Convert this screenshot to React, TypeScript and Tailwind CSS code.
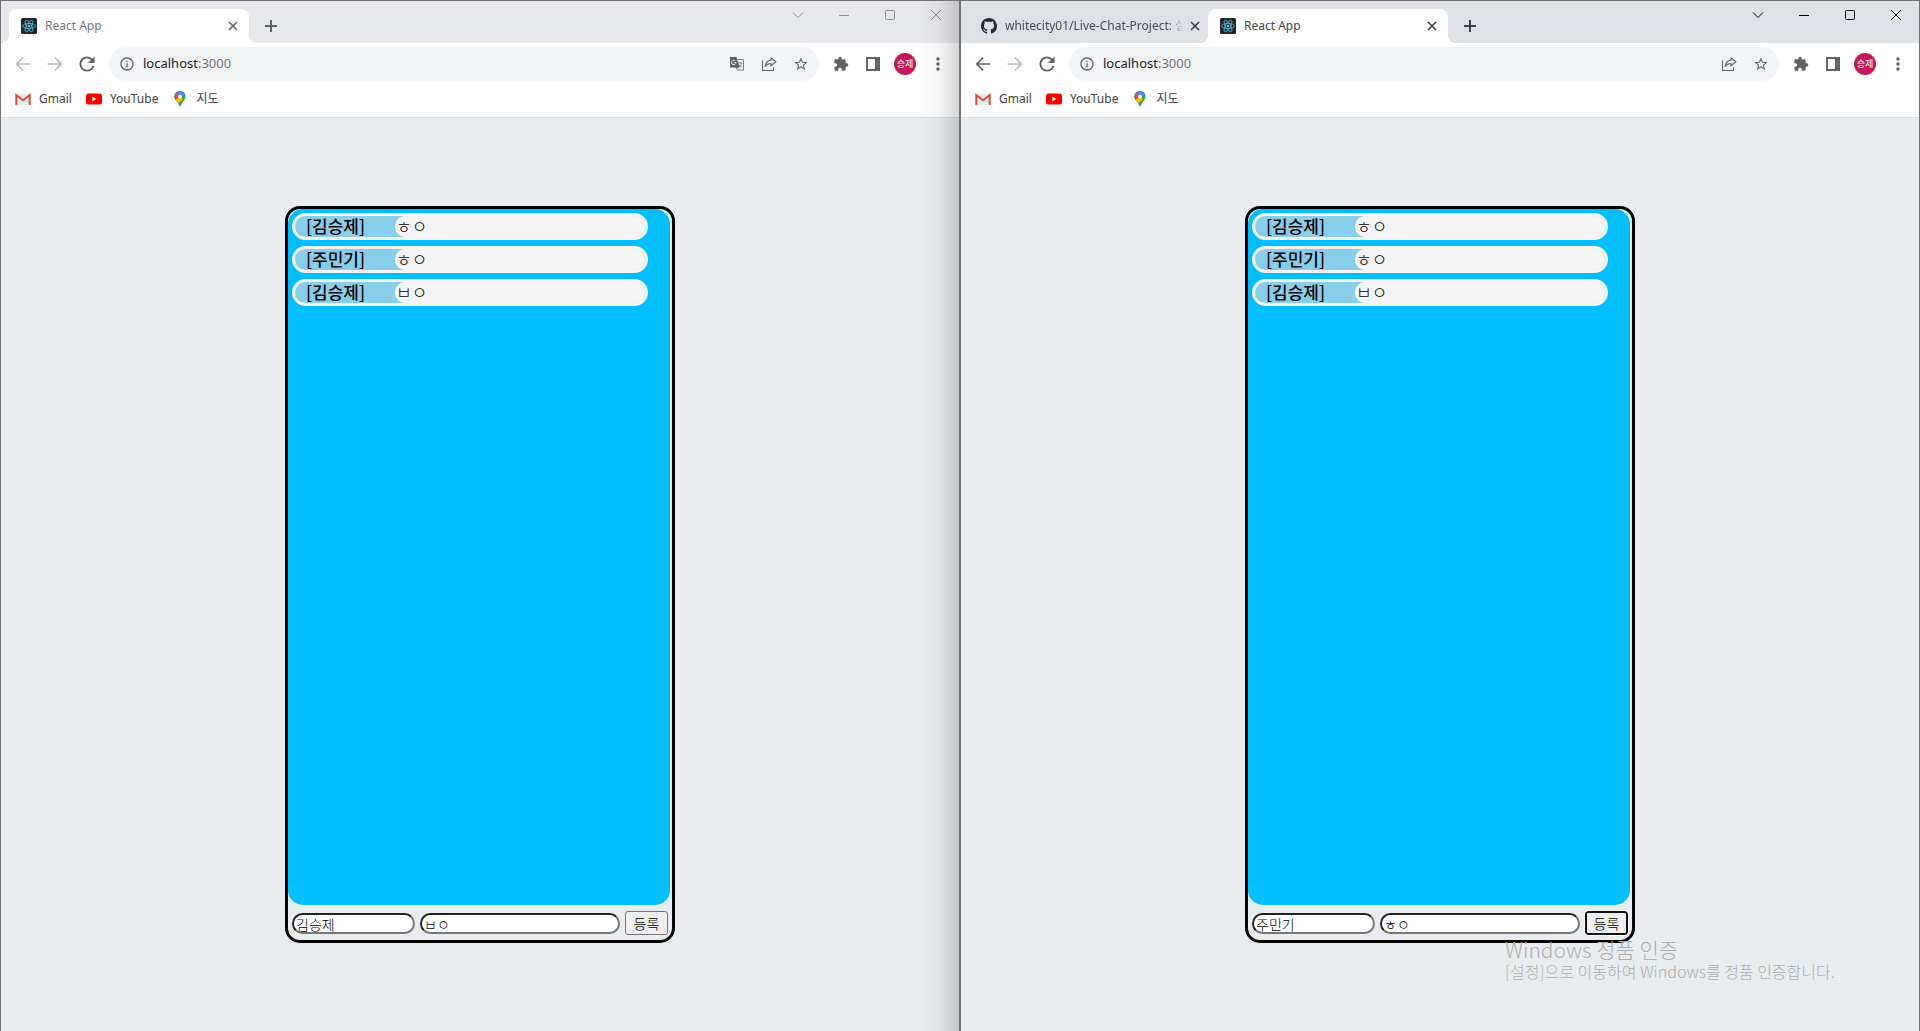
import React from "react";

const UI = "font-['Noto_Sans','Noto_Sans_CJK_KR',sans-serif]";

function ReactLogo() {
  return (
    <svg viewBox="0 0 16 16" className="size-4 shrink-0" aria-hidden="true">
      <rect width="16" height="16" rx="1.5" fill="#20232a" />
      <g fill="none" stroke="#61dafb" strokeWidth="0.8" opacity="0.85">
        <ellipse cx="8" cy="8" rx="6.5" ry="2.5" />
        <ellipse cx="8" cy="8" rx="6.5" ry="2.5" transform="rotate(60 8 8)" />
        <ellipse cx="8" cy="8" rx="6.5" ry="2.5" transform="rotate(120 8 8)" />
      </g>
      <circle cx="8" cy="8" r="1.2" fill="#61dafb" />
    </svg>
  );
}

function GithubLogo() {
  return (
    <svg viewBox="0 0 16 16" className="size-4 shrink-0" fill="#24292f" aria-hidden="true">
      <path d="M8 0C3.58 0 0 3.58 0 8c0 3.54 2.29 6.53 5.47 7.59.4.07.55-.17.55-.38 0-.19-.01-.82-.01-1.49-2.01.37-2.53-.49-2.69-.94-.09-.23-.48-.94-.82-1.13-.28-.15-.68-.52-.01-.53.63-.01 1.08.58 1.23.82.72 1.21 1.87.87 2.33.66.07-.52.28-.87.51-1.07-1.78-.2-3.64-.89-3.64-3.95 0-.87.31-1.59.82-2.15-.08-.2-.36-1.02.08-2.12 0 0 .67-.21 2.2.82.64-.18 1.32-.27 2-.27s1.36.09 2 .27c1.53-1.04 2.2-.82 2.2-.82.44 1.1.16 1.92.08 2.12.51.56.82 1.27.82 2.15 0 3.07-1.87 3.75-3.65 3.95.29.25.54.73.54 1.48 0 1.07-.01 1.93-.01 2.2 0 .21.15.46.55.38A8.01 8.01 0 0 0 16 8c0-4.42-3.58-8-8-8z" />
    </svg>
  );
}

function CloseGlyph() {
  return (
    <svg viewBox="0 0 16 16" className="size-4" stroke="currentColor" strokeWidth="1.6" aria-hidden="true">
      <path d="M4 4l8 8M12 4l-8 8" />
    </svg>
  );
}

function MaterialIcon({ d, className }: { d: string; className: string }) {
  return (
    <svg viewBox="0 0 24 24" className={className} fill="currentColor" aria-hidden="true">
      <path d={d} />
    </svg>
  );
}

const BACK = "M21 11H6.83l6.09-6.09L11.500 3.500 3 12l8.500 8.500 1.420-1.410L6.830 13H21v-2z";
const FORWARD = "M12.500 3.500l-1.420 1.410L17.170 11H3v2h14.170l-6.090 6.090 1.420 1.410L21 12z";
const RELOAD =
  "M18.360 5.640A8.960 8.960 0 0012 3c-4.970 0-9 4.030-9 9s4.030 9 9 9c4.200 0 7.700-2.870 8.700-6.750h-2.340A6.740 6.740 0 0112 18.750c-3.720 0-6.750-3.030-6.750-6.750S8.280 5.250 12 5.250c1.870 0 3.530.780 4.750 2L13.100 10.900H21V3l-2.640 2.640z";
const INFO =
  "M11 7h2v2h-2zm0 4h2v6h-2zm1-9C6.48 2 2 6.48 2 12s4.48 10 10 10 10-4.48 10-10S17.52 2 12 2zm0 18c-4.41 0-8-3.59-8-8s3.59-8 8-8 8 3.59 8 8-3.59 8-8 8z";
const STAR =
  "M22 9.24l-7.19-.62L12 2 9.19 8.63 2 9.24l5.46 4.73L5.82 21 12 17.27 18.18 21l-1.63-7.03L22 9.24zM12 15.4l-3.76 2.27 1-4.28-3.32-2.88 4.38-.38L12 6.1l1.71 4.04 4.38.38-3.32 2.88 1 4.28L12 15.4z";
const PUZZLE =
  "M20.5 11H19V7c0-1.1-.9-2-2-2h-4V3.5a2.5 2.5 0 00-5 0V5H4c-1.1 0-1.99.9-1.99 2v3.8H3.5c1.49 0 2.7 1.21 2.7 2.7s-1.21 2.7-2.7 2.7H2V20c0 1.1.9 2 2 2h3.8v-1.5c0-1.49 1.21-2.7 2.7-2.7 1.49 0 2.7 1.21 2.7 2.7V22H17c1.1 0 2-.9 2-2v-4h1.5a2.5 2.5 0 000-5z";
const MORE =
  "M12 8c1.1 0 2-.9 2-2s-.9-2-2-2-2 .9-2 2 .9 2 2 2zm0 2c-1.1 0-2 .9-2 2s.9 2 2 2 2-.9 2-2-.9-2-2-2zm0 6c-1.1 0-2 .9-2 2s.9 2 2 2 2-.9 2-2-.9-2-2-2z";

function TranslateIcon() {
  return (
    <svg viewBox="0 0 16 16" className="size-4" aria-hidden="true">
      <path d="M6.5 3.5h8v10.5H8.5" fill="none" stroke="#80868b" />
      <path d="M9 7h4.5M11.2 6v1M12.6 7c-.4 2-1.6 3.4-3 4.2M9.8 8.500c.6 1.300 1.600 2.200 3 2.700" fill="none" stroke="#80868b" strokeWidth="0.9" />
      <path d="M1 1h6.500l3 10.500H8.500V14L6.500 11.500H1z" fill="#5f6368" />
      <path d="M6.300 5A2.200 2.200 0 1 0 6.900 6.600H4.900" fill="none" stroke="#f1f3f4" strokeWidth="1" />
    </svg>
  );
}

function ShareIcon() {
  return (
    <svg viewBox="0 0 16 16" className="size-4" fill="none" stroke="currentColor" strokeWidth="1.1" aria-hidden="true">
      <path d="M1.500 4.500v10h11v-3" />
      <path d="M10 1.800l4.900 4-4.900 4V7.500c-2.700 0-4.400.8-5.700 3C4.600 7 6.400 4.500 10 4.100z" strokeLinejoin="round" />
    </svg>
  );
}

function GmailIcon() {
  return (
    <svg viewBox="0 0 16 16" className="size-4 shrink-0" aria-hidden="true">
      <rect x="1" y="3" width="14" height="11" rx="1" fill="#ececec" />
      <path d="M1.300 14V4L8 9.200 14.700 4V14" fill="none" stroke="#dd4b3e" strokeWidth="2" />
    </svg>
  );
}

function YouTubeIcon() {
  return (
    <svg viewBox="0 0 16 16" className="size-4 shrink-0" aria-hidden="true">
      <rect y="2.500" width="16" height="11" rx="2.500" fill="#f00" />
      <path d="M6.300 5.700v4.600L10.500 8z" fill="#fff" />
    </svg>
  );
}

function MapsIcon() {
  return (
    <svg viewBox="0 0 16 16" className="size-4 shrink-0" aria-hidden="true">
      <clipPath id="pin">
        <path d="M8 0a5.500 5.500 0 0 1 5.500 5.500c0 3.500-3.300 4.800-4.600 9.200-.3 1.100-1.500 1.100-1.800 0C5.800 10.300 2.500 9 2.500 5.500A5.500 5.500 0 0 1 8 0z" />
      </clipPath>
      <g clipPath="url(#pin)">
        <path d="M0 0h16v16H0z" fill="#34a853" />
        <path d="M0 0h16v3L8 6 4 10 0 7z" fill="#4285f4" />
        <path d="M2 1l6 4.500-4 4L0 8z" fill="#ea4335" />
        <path d="M3 9.500L8 5l3 3-5.500 5z" fill="#fbbc04" />
      </g>
      <circle cx="8" cy="5.500" r="2" fill="#fff" />
    </svg>
  );
}

function Tab({ title, active, dim }: { title: string; active: boolean; dim: boolean }) {
  if (!active) {
    return (
      <div className="-mr-px flex h-[34px] w-60 items-center pl-3">
        <GithubLogo />
        <span className="ml-2 w-[178px] overflow-hidden whitespace-nowrap text-xs text-[#45484c] [mask-image:linear-gradient(to_right,#000_92%,transparent)]">
          {title}
        </span>
        <button aria-label="탭 닫기" className="ml-1 text-[#3c4043]"><CloseGlyph /></button>
      </div>
    );
  }
  return (
    <div className="relative flex h-[34px] w-60 shrink-0 items-center rounded-t-lg bg-white pl-3 pr-2 before:absolute before:bottom-0 before:-left-2 before:size-2 before:bg-[radial-gradient(circle_at_0_0,transparent_8px,#fff_8px)] after:absolute after:bottom-0 after:-right-2 after:size-2 after:bg-[radial-gradient(circle_at_100%_0,transparent_8px,#fff_8px)]">
      <ReactLogo />
      <span className={dim ? "ml-2 flex-1 text-xs text-[#74777b]" : "ml-2 flex-1 text-xs text-[#45484c]"}>{title}</span>
      <button aria-label="탭 닫기" className={dim ? "text-[#5f6368]" : "text-[#3c4043]"}><CloseGlyph /></button>
    </div>
  );
}

function WindowControls() {
  return (
    <div className="flex items-start">
      <button aria-label="탭 검색" className="grid h-7 w-[46px] place-items-center">
        <svg viewBox="0 0 12 12" className="size-3" fill="none" stroke="currentColor" aria-hidden="true"><path d="M1 3.500l5 5 5-5" /></svg>
      </button>
      <button aria-label="최소화" className="grid h-7 w-[46px] place-items-center">
        <svg viewBox="0 0 10 10" className="size-2.5" fill="none" stroke="currentColor" aria-hidden="true"><path d="M0 5.500h10" /></svg>
      </button>
      <button aria-label="최대화" className="grid h-7 w-[46px] place-items-center">
        <svg viewBox="0 0 10 10" className="size-2.5" fill="none" stroke="currentColor" aria-hidden="true"><rect x=".5" y=".5" width="9" height="9" rx="1" /></svg>
      </button>
      <button aria-label="닫기" className="grid h-7 w-[46px] place-items-center">
        <svg viewBox="0 0 10 10" className="size-2.5" fill="none" stroke="currentColor" aria-hidden="true"><path d="M0 0l10 10M10 0L0 10" /></svg>
      </button>
    </div>
  );
}

function Toolbar({ canGoBack, translate }: { canGoBack: boolean; translate: boolean }) {
  return (
    <div className="flex h-[42px] items-center bg-white pl-3 pr-[11px] text-[#5f6368]">
      <div className="flex gap-3">
        <button aria-label="뒤로" className={canGoBack ? "text-[#5f6368]" : "text-[#babcbe]"}><MaterialIcon d={BACK} className="size-5" /></button>
        <button aria-label="앞으로" className="text-[#babcbe]"><MaterialIcon d={FORWARD} className="size-5" /></button>
        <button aria-label="새로고침"><MaterialIcon d={RELOAD} className="size-5" /></button>
      </div>
      <div className="ml-3 flex h-[34px] flex-1 items-center rounded-full bg-[#f1f3f4] pl-2.5 pr-2.5">
        <MaterialIcon d={INFO} className="size-4" />
        <a href="#" className="ml-2 flex-1 text-[13px] text-[#202124]">localhost<span className="text-[#6d7175]">:3000</span></a>
        <div className="flex gap-4">
          {translate && <button aria-label="번역"><TranslateIcon /></button>}
          <button aria-label="공유"><ShareIcon /></button>
          <button aria-label="북마크"><MaterialIcon d={STAR} className="size-4" /></button>
        </div>
      </div>
      <div className="ml-3.5 flex items-center">
        <button aria-label="확장 프로그램"><MaterialIcon d={PUZZLE} className="size-4" /></button>
        <button aria-label="측면 패널" className="ml-4">
          <svg viewBox="0 0 16 16" className="size-4" aria-hidden="true"><path fill="currentColor" fillRule="evenodd" d="M1 1h14v14H1zM3 3v10h7V3z" /></svg>
        </button>
        <button aria-label="프로필" className="ml-[13px] size-[22px] rounded-full bg-[#c2185b] text-center text-[9px] leading-[22px] whitespace-nowrap text-white">승제</button>
        <button aria-label="메뉴" className="ml-3"><MaterialIcon d={MORE} className="size-5" /></button>
      </div>
    </div>
  );
}

function Bookmarks() {
  return (
    <nav className="flex h-[33px] items-center border-b border-[#dadce0] bg-white pb-1 pl-3.5 text-xs text-[#3c4043]">
      <a href="#" className="flex items-center gap-2"><GmailIcon />Gmail</a>
      <a href="#" className="ml-3.5 flex items-center gap-2"><YouTubeIcon />YouTube</a>
      <a href="#" className="ml-3.5 flex items-center gap-2"><MapsIcon />지도</a>
    </nav>
  );
}

type Message = { name: string; text: string };

const MESSAGES: Message[] = [
  { name: "김승제", text: "ㅎㅇ" },
  { name: "주민기", text: "ㅎㅇ" },
  { name: "김승제", text: "ㅂㅇ" },
];

const FIELD =
  "mt-0.5 h-[21px] rounded-[15px] border-2 border-t-[#222] border-r-[#767676] border-b-[#767676] border-l-[#222] bg-white pl-0.5 text-sm font-light text-black outline-none";

function Chat({ id, name, text, focused }: { id: string; name: string; text: string; focused: boolean }) {
  return (
    <main className="flex flex-1 flex-col items-center bg-[#e8ecef] pt-[88px] font-['Noto_Sans_CJK_KR',sans-serif]">
      <section className="flex h-[737px] w-[390px] flex-col rounded-[15px] border-[3px] border-black">
        <ul className="mr-0.5 flex flex-1 flex-col gap-1.5 rounded-[15px] bg-[#00bfff] p-1">
          {MESSAGES.map((m, i) => (
            <li key={i} className="flex h-[27px] w-[356px] rounded-[15px] border-[3px] border-[#f5f5f5] bg-[#87ceeb]">
              <b className="w-[100px] pl-[11px] text-[17px] leading-5 font-medium text-black">[{m.name}]</b>
              <span className="flex-1 rounded-[10px] bg-[#f5f5f5] pl-px text-[17px] leading-5 font-light text-black">{m.text}</span>
            </li>
          ))}
        </ul>
        <form className="flex h-[35px] items-start gap-[5px] px-1 pt-1.5" onSubmit={(e) => e.preventDefault()}>
          <input aria-label="이름" id={id + "-name"} defaultValue={name} className={FIELD + " w-[123px]"} />
          <input aria-label="메시지" id={id + "-text"} defaultValue={text} className={FIELD + " w-[200px]"} />
          <button
            type="submit"
            className={
              focused
                ? "h-6 w-[43px] rounded-[3px] border-2 border-[#101010] bg-[#efefef] text-sm leading-5 font-light text-black outline outline-white"
                : "h-6 w-[43px] rounded-[3px] border border-[#767676] bg-[#efefef] text-sm leading-5 font-light text-black"
            }
          >
            등록
          </button>
        </form>
      </section>
    </main>
  );
}

export default function App() {
  return (
    <div className={"relative flex h-screen overflow-hidden " + UI}>
      <div className="relative flex flex-1 flex-col border-t border-r border-l border-[#757376]">
        <header className="flex h-[42px] justify-between bg-[#e7e8ec] text-[#8a8b8e]">
          <div className="flex items-end pl-2">
            <Tab title="React App" active dim />
            <button aria-label="새 탭" className="mb-[7px] ml-3 text-[#5f6368]">
              <svg viewBox="0 0 20 20" className="size-5" stroke="currentColor" strokeWidth="2" aria-hidden="true"><path d="M4 10h12M10 4v12" /></svg>
            </button>
          </div>
          <WindowControls />
        </header>
        <Toolbar canGoBack={false} translate />
        <Bookmarks />
        <Chat id="left" name="김승제" text="ㅂㅇ" focused={false} />
        <div className="pointer-events-none absolute inset-y-0 right-0 w-10 bg-linear-to-r from-transparent via-black/4 to-black/16" />
      </div>
      <div className="relative flex flex-1 flex-col border-t border-r border-l border-[#757376]">
        <header className="flex h-[42px] justify-between bg-[#dee1e6] text-black">
          <div className="flex items-end pl-2">
            <Tab title="whitecity01/Live-Chat-Project: 실시간 채팅" active={false} dim={false} />
            <Tab title="React App" active dim={false} />
            <button aria-label="새 탭" className="mb-[7px] ml-3 text-[#3c4043]">
              <svg viewBox="0 0 20 20" className="size-5" stroke="currentColor" strokeWidth="2" aria-hidden="true"><path d="M4 10h12M10 4v12" /></svg>
            </button>
          </div>
          <WindowControls />
        </header>
        <Toolbar canGoBack translate={false} />
        <Bookmarks />
        <Chat id="right" name="주민기" text="ㅎㅇ" focused />
      </div>
      <div className="pointer-events-none absolute right-20 bottom-[50px] w-[335px] font-['Noto_Sans_CJK_KR',sans-serif] font-light whitespace-nowrap text-[#aaacae]">
        <p className="text-[21px] leading-6">Windows 정품 인증</p>
        <p className="text-base leading-5">[설정]으로 이동하여 Windows를 정품 인증합니다.</p>
      </div>
    </div>
  );
}
